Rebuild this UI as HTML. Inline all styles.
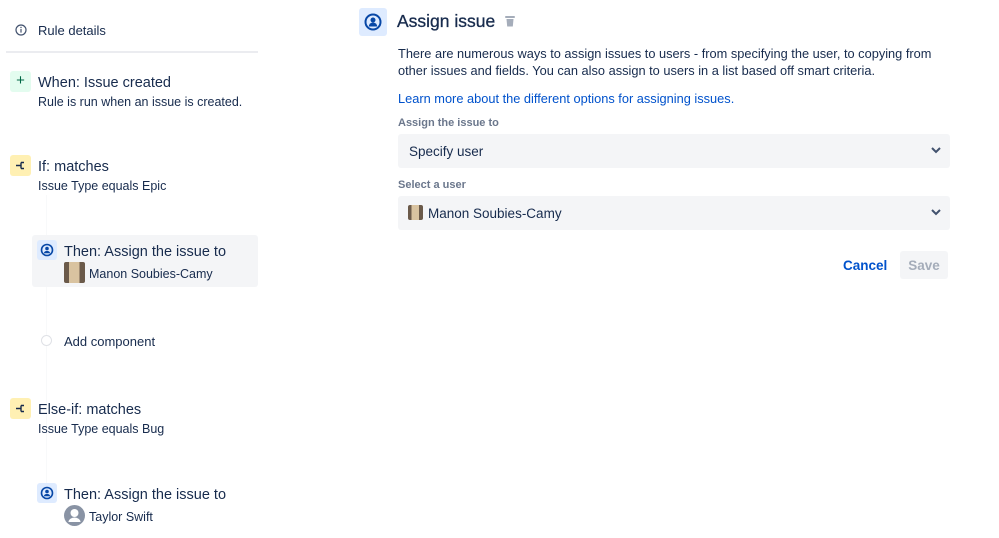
<!DOCTYPE html>
<html><head><style>
*{margin:0;padding:0;box-sizing:border-box}
body{width:999px;height:538px;background:#fff;font-family:"Liberation Sans",sans-serif;color:#172b4d;position:relative;overflow:hidden}
.a{position:absolute;white-space:nowrap}
.t{font-size:14.5px;line-height:18px}
.s{font-size:12.5px;line-height:16px}
.ib{position:absolute;width:21px;height:21px;border-radius:3px}
.sel{position:absolute;left:398px;width:552px;height:34px;background:#f4f5f7;border-radius:3px}
</style></head><body>
<svg class="a" style="left:15px;top:24px" width="12" height="12" viewBox="0 0 12 12"><circle cx="6" cy="6" r="5" fill="none" stroke="#42526e" stroke-width="1.2"/><rect x="5.4" y="5" width="1.2" height="3.6" fill="#42526e"/><circle cx="6" cy="3.5" r=".7" fill="#42526e"/></svg>
<div class="a s" style="left:38px;top:23px;font-size:13px">Rule details</div>
<div class="a" style="left:6px;top:51px;width:252px;height:2px;background:#ebecf0"></div>

<div class="ib" style="left:10px;top:71px;background:#e3fcef;color:#006644;text-align:center;font-size:15px;line-height:20px">+</div>
<div class="a t" style="left:38px;top:74px">When: Issue created</div>
<div class="a s" style="left:38px;top:94px">Rule is run when an issue is created.</div>

<div class="ib" style="left:10px;top:155px;background:#fff0b3"><svg width="21" height="21" viewBox="0 0 21 21"><path d="M6 10.5h5M11 7.5v6M11 7.5h3M11 13.5h3" stroke="#172b4d" stroke-width="1.4" fill="none"/></svg></div>
<div class="a t" style="left:38px;top:158px">If: matches</div>
<div class="a s" style="left:38px;top:178px">Issue Type equals Epic</div>

<div class="a" style="left:46px;top:195px;width:1px;height:300px;background:#f8f9fa"></div>
<div class="a" style="left:32px;top:235px;width:226px;height:52px;background:#f4f5f7;border-radius:3px"></div>
<div class="ib" style="left:37px;top:240px;width:20px;height:20px;background:#deebff"><svg width="20" height="20" viewBox="0 0 20 20"><circle cx="10" cy="10" r="5.5" fill="none" stroke="#0747a6" stroke-width="1.6"/><circle cx="10" cy="8.5" r="1.8" fill="#0747a6"/><path d="M6.8 13.2a3.3 3 0 0 1 6.4 0z" fill="#0747a6"/></svg></div>
<div class="a t" style="left:64px;top:243px">Then: Assign the issue to</div>
<div class="a" style="left:64px;top:262px;width:21px;height:21px;background:linear-gradient(90deg,#6b5a4a 0 25%,#d9c3a0 25% 75%,#6b5a4a 75%);border-radius:2px"></div>
<div class="a s" style="left:89px;top:266px">Manon Soubies-Camy</div>

<div class="a" style="left:41px;top:335px;width:11px;height:11px;border:1px solid #dfe1e6;border-radius:50%;background:#fff"></div>
<div class="a s" style="left:64px;top:334px;font-size:13px">Add component</div>

<div class="ib" style="left:10px;top:398px;background:#fff0b3"><svg width="21" height="21" viewBox="0 0 21 21"><path d="M6 10.5h5M11 7.5v6M11 7.5h3M11 13.5h3" stroke="#172b4d" stroke-width="1.4" fill="none"/></svg></div>
<div class="a t" style="left:38px;top:401px">Else-if: matches</div>
<div class="a s" style="left:38px;top:421px">Issue Type equals Bug</div>

<div class="ib" style="left:37px;top:483px;width:20px;height:20px;background:#deebff"><svg width="20" height="20" viewBox="0 0 20 20"><circle cx="10" cy="10" r="5.5" fill="none" stroke="#0747a6" stroke-width="1.6"/><circle cx="10" cy="8.5" r="1.8" fill="#0747a6"/><path d="M6.8 13.2a3.3 3 0 0 1 6.4 0z" fill="#0747a6"/></svg></div>
<div class="a t" style="left:64px;top:486px">Then: Assign the issue to</div>
<svg class="a" style="left:64px;top:505px" width="21" height="21" viewBox="0 0 21 21"><circle cx="10.5" cy="10.5" r="10.5" fill="#8993a4"/><circle cx="10.5" cy="8" r="4" fill="#fff"/><path d="M4.5 17a6 4.5 0 0 1 12 0z" fill="#fff"/></svg>
<div class="a s" style="left:89px;top:509px">Taylor Swift</div>

<div class="a" style="left:359px;top:8px;width:28px;height:28px;background:#deebff;border-radius:3px"><svg width="28" height="28" viewBox="0 0 28 28"><circle cx="14" cy="14" r="7.5" fill="none" stroke="#0747a6" stroke-width="2"/><circle cx="14" cy="12" r="2.5" fill="#0747a6"/><path d="M9.8 18.5a4.2 4 0 0 1 8.4 0z" fill="#0747a6"/></svg></div>
<div class="a" style="left:397px;top:10px;font-size:17.5px;line-height:22px;-webkit-text-stroke:0.3px #172b4d">Assign issue</div>
<svg class="a" style="left:505px;top:15px" width="10" height="12" viewBox="0 0 10 12"><rect x="0" y="1" width="10" height="2" rx="1" fill="#a5adba"/><path d="M1.5 4h7l-.7 7.5h-5.6z" fill="#a5adba"/></svg>
<div class="a" style="left:398px;top:45px;font-size:12.8px;line-height:17px">There are numerous ways to assign issues to users - from specifying the user, to copying from<br>other issues and fields. You can also assign to users in a list based off smart criteria.</div>
<div class="a" style="left:398px;top:90px;font-size:12.8px;line-height:17px;color:#0052cc">Learn more about the different options for assigning issues.</div>
<div class="a" style="left:398px;top:117px;font-size:11px;font-weight:bold;color:#6b778c">Assign the issue to</div>
<div class="sel" style="top:134px"></div>
<div class="a" style="left:409px;top:144px;font-size:13.5px">Specify user</div>
<svg class="a" style="left:930px;top:146px" width="12" height="9" viewBox="0 0 12 9"><path d="M2 2l4 4 4-4" stroke="#42526e" stroke-width="2" fill="none"/></svg>
<div class="a" style="left:398px;top:179px;font-size:11px;font-weight:bold;color:#6b778c">Select a user</div>
<div class="sel" style="top:196px"></div>
<div class="a" style="left:408px;top:205px;width:15px;height:15px;background:linear-gradient(90deg,#6b5a4a 0 25%,#d9c3a0 25% 75%,#6b5a4a 75%);border-radius:2px"></div>
<div class="a" style="left:428px;top:206px;font-size:13.5px">Manon Soubies-Camy</div>
<svg class="a" style="left:930px;top:208px" width="12" height="9" viewBox="0 0 12 9"><path d="M2 2l4 4 4-4" stroke="#42526e" stroke-width="2" fill="none"/></svg>
<div class="a" style="left:843px;top:258px;font-size:13.5px;font-weight:bold;color:#0052cc">Cancel</div>
<div class="a" style="left:900px;top:251px;width:48px;height:28px;background:#f4f5f7;border-radius:3px;color:#a5adba;font-size:13.5px;line-height:29px;text-align:center;font-weight:bold">Save</div>
</body></html>
